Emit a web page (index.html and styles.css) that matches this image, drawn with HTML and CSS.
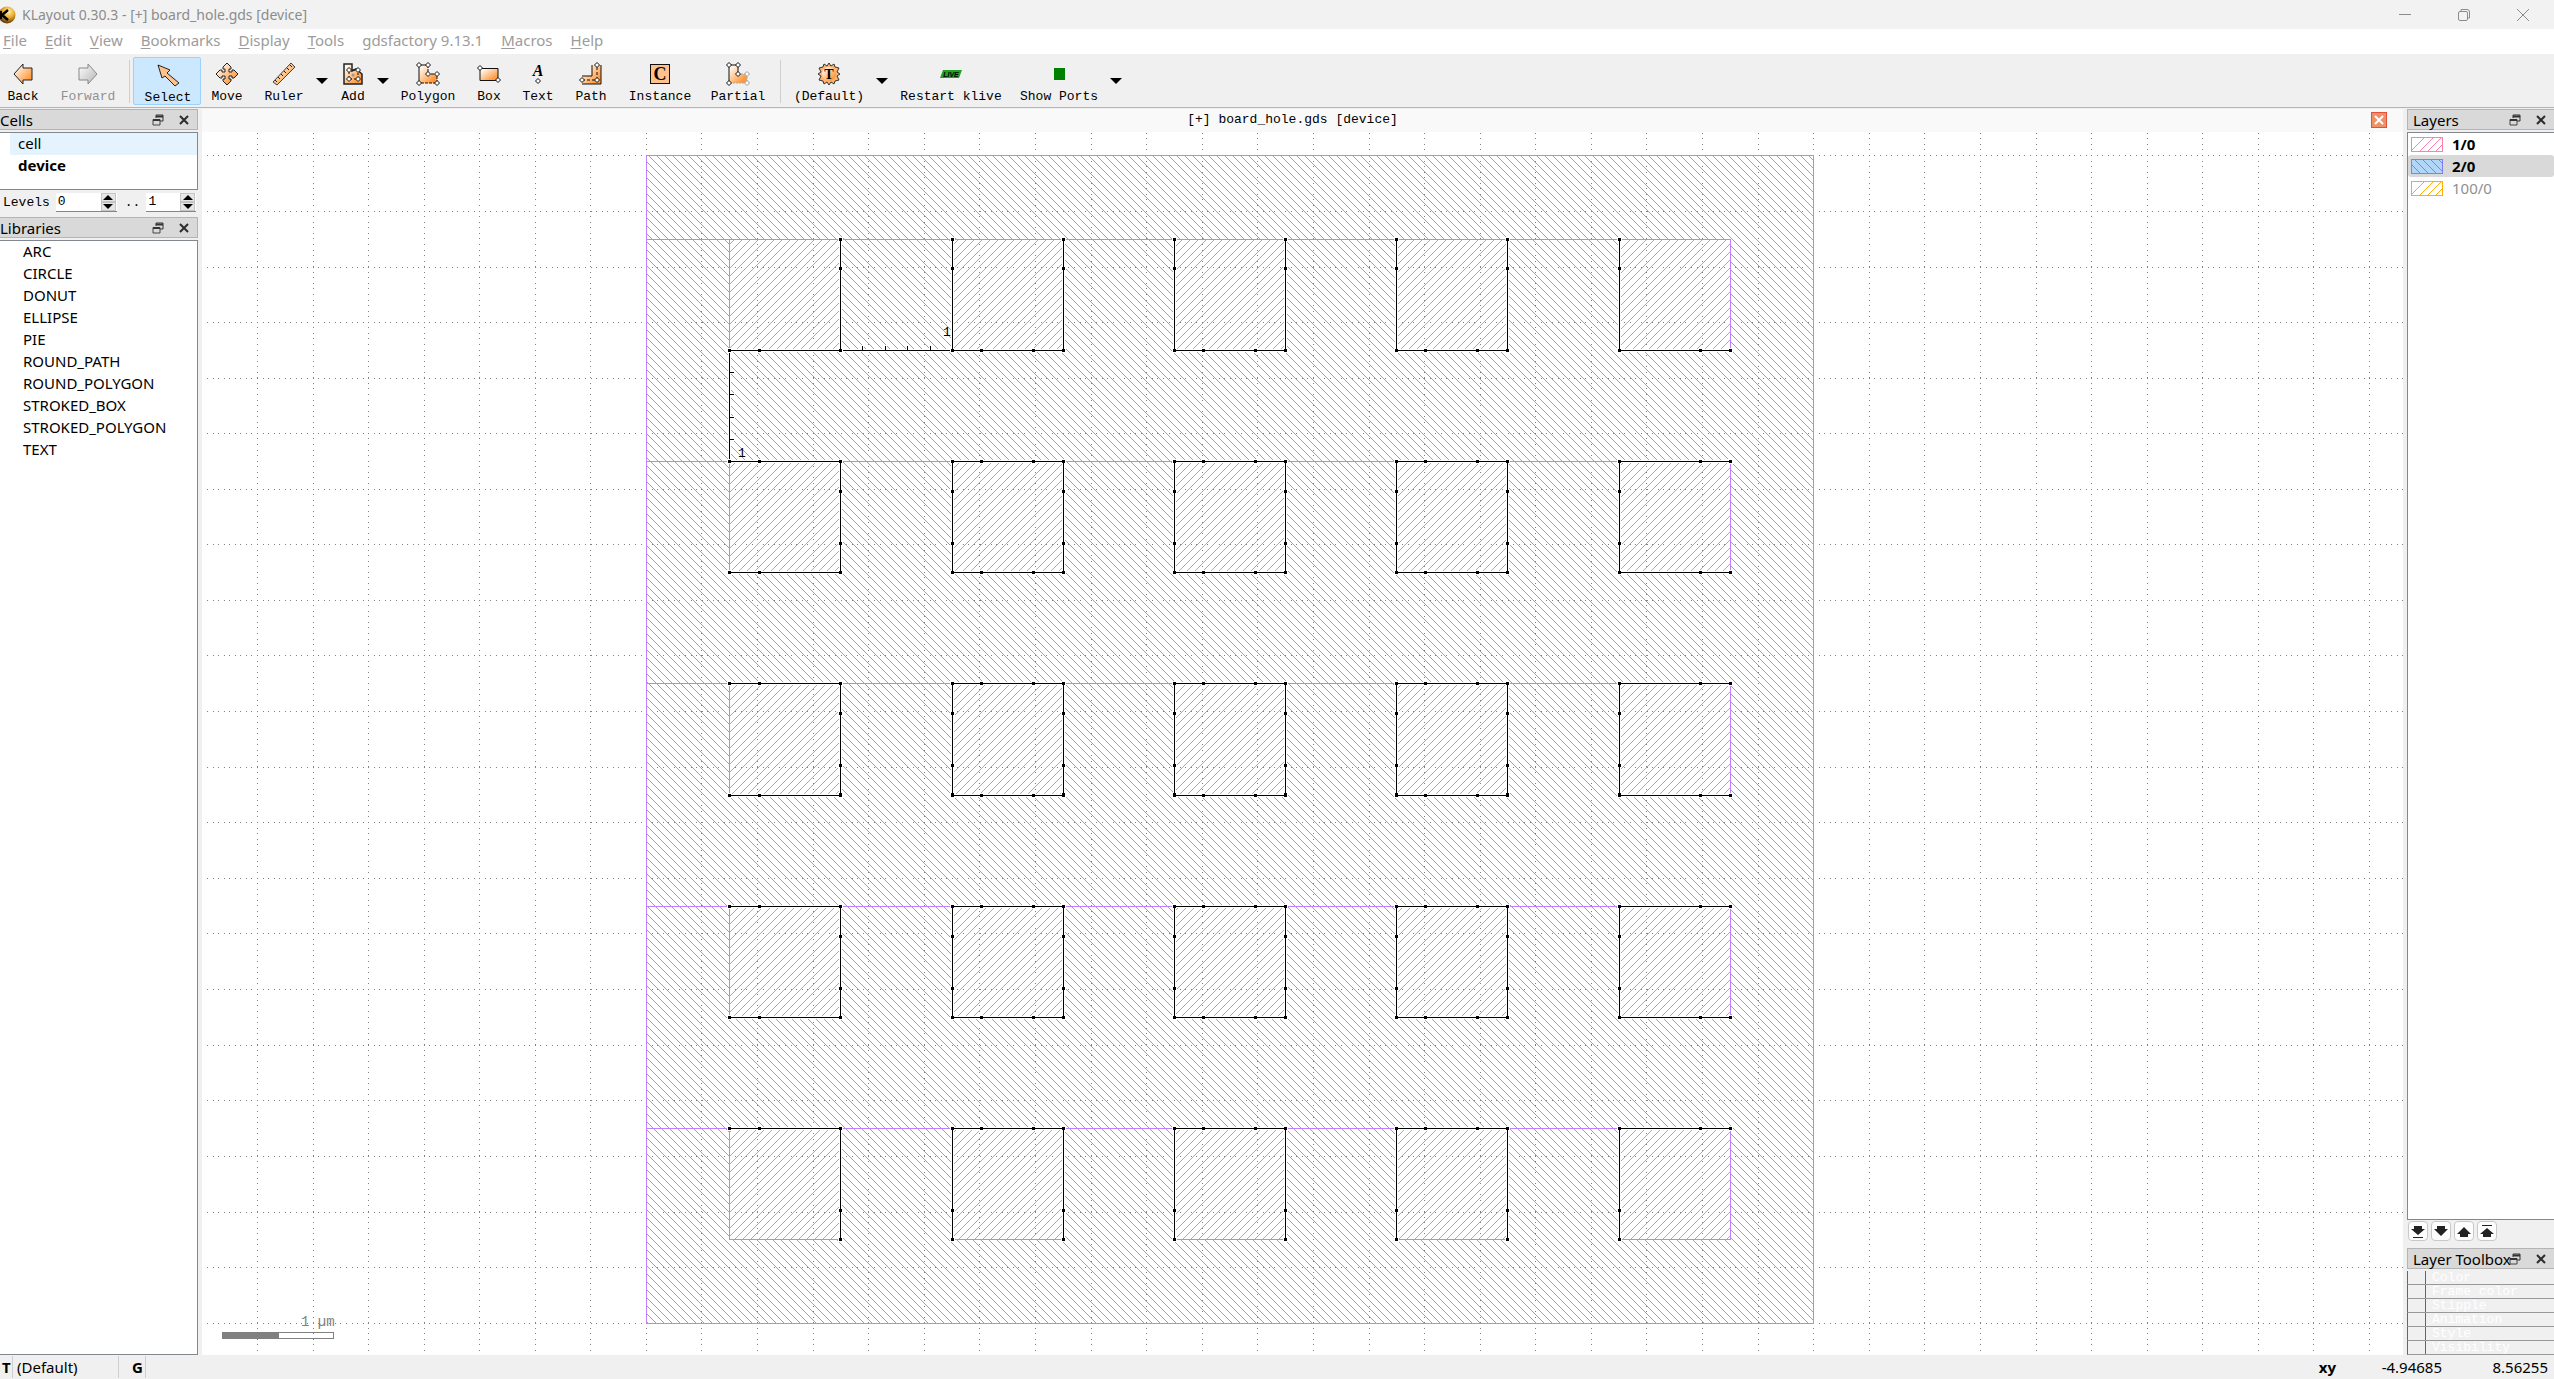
FILE: index.html
```html
<!DOCTYPE html>
<html lang="en">
<head>
<meta charset="utf-8">
<title>KLayout 0.30.3 - [+] board_hole.gds [device]</title>
<link rel="stylesheet" href="styles.css">
</head>
<body>
<svg class="defs" width="0" height="0" aria-hidden="true">
  <defs>
    <linearGradient id="orange" x1="0" y1="0" x2="1" y2="1"><stop offset=".15" stop-color="#fff4ea"/><stop offset=".8" stop-color="#ff9a3c"/></linearGradient>
    <linearGradient id="grey" x1="0" y1="0" x2="1" y2="1"><stop offset="0" stop-color="#fff"/><stop offset="1" stop-color="#b4b4b4"/></linearGradient>
    <radialGradient id="gold" cx=".6" cy=".3" r=".7"><stop offset="0" stop-color="#fff3a8"/><stop offset=".5" stop-color="#e8a92c"/><stop offset="1" stop-color="#5c3608"/></radialGradient>
    <path id="node" d="M0-2.500L2.500 0L0 2.500L-2.500 0Z" stroke-width="1"/>
    <g id="float"><path d="M4 4V1H11V7H8" fill="none" stroke="#333"/><path d="M4 2.500H11" stroke="#333" stroke-width="2"/><path d="M1 5.500H8V11H1Z" fill="#d9d9d9" stroke="#444"/><path d="M1 6H8" stroke="#333" stroke-width="2"/></g>
    <path id="cross" d="M2 2L10 10M10 2L2 10" stroke="#2c2c2c" stroke-width="2"/>
  </defs>
</svg>

<header class="titlebar">
  <svg class="app-icon" width="17" height="18" viewBox="0 0 17 18"><circle cx="7" cy="9" r="8.500" fill="url(#gold)"/><path d="M0 5H2V13H0Z" fill="#000"/><path d="M8 4L2 9L8 14" fill="none" stroke="#000" stroke-width="2.500"/></svg>
  <h1>KLayout 0.30.3 - [+] board_hole.gds [device]</h1>
  <div class="window-controls">
    <button aria-label="Minimize"><svg width="14" height="14"><path d="M1 6.500H13"/></svg></button>
    <button aria-label="Restore"><svg width="14" height="14"><rect x="1.500" y="3.500" width="9" height="9" rx="1.500"/><path d="M4 3V1.500H10Q12.500 1.500 12.500 4V10H11"/></svg></button>
    <button aria-label="Close"><svg width="14" height="14"><path d="M1 1L13 13M13 1L1 13"/></svg></button>
  </div>
</header>

<nav class="menubar">
  <button><u>F</u>ile</button><button><u>E</u>dit</button><button><u>V</u>iew</button><button><u>B</u>ookmarks</button><button><u>D</u>isplay</button><button><u>T</u>ools</button><button>gdsfactory 9.13.1</button><button><u>M</u>acros</button><button><u>H</u>elp</button>
</nav>

<div class="toolbar" role="toolbar">
  <button class="tool w46"><svg class="icon"><path d="M3 12L12 2V6H21V18H12V22Z" fill="url(#orange)" stroke="#222"/></svg>Back</button>
  <button class="tool w84" disabled><svg class="icon"><path d="M21 12L12 2V6H3V18H12V22Z" fill="url(#grey)" stroke="#888"/></svg>Forward</button>
  <span class="sep"></span>
  <button class="tool w68 active"><svg class="icon"><path d="M2 2L14 7L11 10L23 20L19 23L9 13L6 15Z" fill="#ffc28a" stroke="#222"/></svg>Select</button>
  <button class="tool w52"><svg class="icon"><path d="M12 1L16 5V7H14V10H17V8H19L23 12L19 16H17V14H14V17H16V19L12 23L8 19V17H10V14H7V16H5L1 12L5 8H7V10H10V7H8V5Z" fill="url(#orange)" stroke="#222"/></svg>Move</button>
  <button class="tool w62"><svg class="icon"><path d="M1 20L5 23L23 5L19 1Z" fill="url(#orange)" stroke="#444"/><path d="M3 18L5 20M6 15L8 17M9 12L11 14M12 9L14 11M15 6L17 8M18 3L20 5" stroke="#222"/></svg>Ruler</button>
  <button class="drop w14" aria-label="Ruler options"></button>
  <button class="tool w48"><svg class="icon"><path d="M3 2H11V9L15 7L21 12V22H3Z" fill="url(#orange)" stroke="#222" stroke-width="1.500"/><path d="M8 8H17V17H8Z" fill="none" stroke="#111" stroke-dasharray="2 2"/><circle cx="12" cy="13" r="1.500" fill="#999"/><g class="nodes"><use href="#node" x="8" y="8"/><use href="#node" x="17" y="8"/><use href="#node" x="8" y="17"/><use href="#node" x="17" y="17"/></g></svg>Add</button>
  <button class="drop w12" aria-label="Add options"></button>
  <button class="tool w78"><svg class="icon"><path d="M3 3H12V12H21V21H3Z" fill="url(#orange)"/><path d="M3 21V3H12" fill="none" stroke="#111"/><path d="M12 3V12H21V21H3" fill="none" stroke="#111" stroke-dasharray="3 1"/><g class="nodes"><use href="#node" x="3" y="3"/><use href="#node" x="12" y="3"/><use href="#node" x="12" y="12"/><use href="#node" x="21" y="12"/><use href="#node" x="21" y="21"/><use href="#node" x="3" y="21"/></g></svg>Polygon</button>
  <button class="tool w44"><svg class="icon"><path d="M3 6.500H21V18.500H3Z" fill="url(#orange)" stroke="#111"/><g class="nodes"><use href="#node" x="3" y="6"/><use href="#node" x="21" y="18"/></g></svg>Box</button>
  <button class="tool w54"><svg class="icon"><text x="12" y="14" class="glyph-a">A</text><g class="nodes"><use href="#node" x="12" y="19"/></g></svg>Text</button>
  <button class="tool w52"><svg class="icon"><path d="M13 3H22V22H3V14H13Z" fill="url(#orange)"/><path d="M22 3V22H3M13 3V14H3" fill="none" stroke="#111"/><path d="M3 18H18V3" fill="none" stroke="#111" stroke-dasharray="3 2"/><g class="nodes"><use href="#node" x="3" y="18"/><use href="#node" x="18" y="18"/><use href="#node" x="18" y="3"/></g></svg>Path</button>
  <button class="tool w86"><svg class="icon"><rect x="2.500" y="2.500" width="19" height="19" fill="#ffc28c" stroke="#111"/><text x="12" y="18" class="glyph-c">C</text></svg>Instance</button>
  <button class="tool w70"><svg class="icon"><path d="M3 3H12V12H21V21H3Z" fill="url(#orange)"/><path d="M3 21V3H12V12" fill="none" stroke="#111"/><path d="M12 12H21V21H3" fill="none" stroke="#aaa" stroke-dasharray="2 1"/><g class="nodes"><use href="#node" x="3" y="3"/><use href="#node" x="12" y="3"/><use href="#node" x="12" y="12"/><use href="#node" x="3" y="21"/></g><g class="nodes pale"><use href="#node" x="21" y="12"/><use href="#node" x="21" y="21"/></g></svg>Partial</button>
  <span class="sep wide"></span>
  <button class="tool w84"><svg class="icon"><path d="M12 1L14 4L17 2L18 5L22 6L20 10L23 12L20 14L22 18L18 19L17 22L14 20L12 23L10 20L7 22L6 19L2 18L4 14L1 12L4 10L2 6L6 5L7 2L10 4Z" fill="#ffb26b" stroke="#333"/><circle cx="12" cy="12" r="7" fill="url(#orange)"/><text x="12" y="17" class="glyph-t">T</text></svg>(Default)</button>
  <button class="drop w22" aria-label="Technology options"></button>
  <button class="tool w116"><svg class="icon"><path d="M4 8H23L20 16H1Z" fill="#22a122"/><text x="12" y="15" class="glyph-live">LIVE</text></svg>Restart klive</button>
  <button class="tool w100"><svg class="icon"><rect x="7" y="6" width="11" height="12" fill="#008000"/></svg>Show Ports</button>
  <button class="drop w14" aria-label="Port options"></button>
</div>

<div class="workspace">
  <aside class="left">
    <section class="dock">
      <h2><span>Cells</span><button aria-label="Float"><svg width="12" height="12"><use href="#float"/></svg></button><button aria-label="Close"><svg width="12" height="12"><use href="#cross"/></svg></button></h2>
      <ul class="list cells"><li class="hover">cell</li><li class="top">device</li></ul>
      <div class="levels">
        <label for="lv0">Levels</label>
        <span class="spin"><input id="lv0" type="text" value="0"><span class="arrows"><button class="up" aria-label="Up"></button><button class="down" aria-label="Down"></button></span></span>
        <label for="lv1">..</label>
        <span class="spin short"><input id="lv1" type="text" value="1"><span class="arrows"><button class="up" aria-label="Up"></button><button class="down" aria-label="Down"></button></span></span>
      </div>
    </section>
    <section class="dock grow">
      <h2><span>Libraries</span><button aria-label="Float"><svg width="12" height="12"><use href="#float"/></svg></button><button aria-label="Close"><svg width="12" height="12"><use href="#cross"/></svg></button></h2>
      <ul class="list libs"><li>ARC</li><li>CIRCLE</li><li>DONUT</li><li>ELLIPSE</li><li>PIE</li><li>ROUND_PATH</li><li>ROUND_POLYGON</li><li>STROKED_BOX</li><li>STROKED_POLYGON</li><li>TEXT</li></ul>
    </section>
  </aside>

  <main class="view">
    <div class="tab"><span>[+] board_hole.gds [device]</span><button aria-label="Close tab"><svg width="14" height="14"><path d="M3 3L11 11M11 3L3 11" stroke="#fff" stroke-width="2"/></svg></button></div>
    <svg class="layout" shape-rendering="crispEdges">
      <defs>
        <pattern id="hatch2" width="8" height="8" patternUnits="userSpaceOnUse"><path fill="#c080ff" d="M2 0h1v1h-1zM3 1h1v1h-1zM4 2h1v1h-1zM5 3h1v1h-1zM6 4h1v1h-1zM7 5h1v1h-1zM0 6h1v1h-1zM1 7h1v1h-1z"/></pattern>
        <pattern id="hatch1" width="8" height="8" patternUnits="userSpaceOnUse"><path fill="#ff80a8" d="M4 0h1v1h-1zM3 1h1v1h-1zM2 2h1v1h-1zM1 3h1v1h-1zM0 4h1v1h-1zM7 5h1v1h-1zM6 6h1v1h-1zM5 7h1v1h-1z"/></pattern>
        <!-- 3px handle and the horizontal / vertical edge lines it sits on -->
        <rect id="dot" x="-1" y="-1" width="3" height="3"/>
        <g id="hfirst"><rect width="112" height="1"/><use href="#dot"/><use href="#dot" x="30"/><use href="#dot" x="111"/></g>
        <g id="hmid"><rect width="112" height="1"/><use href="#dot"/><use href="#dot" x="29"/><use href="#dot" x="81"/><use href="#dot" x="111"/></g>
        <g id="hlast"><rect width="112" height="1"/><use href="#dot"/><use href="#dot" x="81"/><use href="#dot" x="111"/></g>
        <g id="vtop"><rect width="1" height="112"/><use href="#dot"/><use href="#dot" y="29"/><use href="#dot" y="111"/></g>
        <g id="vmid"><rect width="1" height="112"/><use href="#dot"/><use href="#dot" y="30"/><use href="#dot" y="82"/><use href="#dot" y="111"/></g>
        <g id="vbot"><rect width="1" height="112"/><use href="#dot"/><use href="#dot" y="82"/><use href="#dot" y="111"/></g>
        <g id="hrow"><use href="#hfirst" x="83"/><use href="#hmid" x="306"/><use href="#hmid" x="528"/><use href="#hmid" x="750"/><use href="#hlast" x="973"/></g>
        <g id="vrowtop"><use href="#vtop" x="194"/><use href="#vtop" x="306"/><use href="#vtop" x="417"/><use href="#vtop" x="528"/><use href="#vtop" x="639"/><use href="#vtop" x="750"/><use href="#vtop" x="861"/><use href="#vtop" x="973"/></g>
        <g id="vrowmid"><use href="#vmid" x="194"/><use href="#vmid" x="306"/><use href="#vmid" x="417"/><use href="#vmid" x="528"/><use href="#vmid" x="639"/><use href="#vmid" x="750"/><use href="#vmid" x="861"/><use href="#vmid" x="973"/></g>
        <g id="vrowbot"><use href="#vbot" x="194"/><use href="#vbot" x="306"/><use href="#vbot" x="417"/><use href="#vbot" x="528"/><use href="#vbot" x="639"/><use href="#vbot" x="750"/><use href="#vbot" x="861"/><use href="#vbot" x="973"/></g>
        <g id="rulers">
          <use href="#hrow" y="195"/><use href="#hrow" y="306"/><use href="#hrow" y="417"/><use href="#hrow" y="528"/><use href="#hrow" y="640"/><use href="#hrow" y="751"/><use href="#hrow" y="862"/><use href="#hrow" y="973"/>
          <use href="#vrowtop" y="84"/><use href="#vrowmid" y="306"/><use href="#vrowmid" y="528"/><use href="#vrowmid" y="751"/><use href="#vrowbot" y="973"/>
          <path d="M197 195h107v1h-107zM216 191h1v4h-1zM239 191h1v4h-1zM261 191h1v4h-1zM284 191h1v4h-1zM83 198h1v106h-1zM84 217h4v1h-4zM84 239h4v1h-4zM84 262h4v1h-4zM84 284h4v1h-4z"/>
        </g>
        <path id="holes" d="M83 84h112v112h-112zM306 84h112v112h-112zM528 84h112v112h-112zM750 84h112v112h-112zM973 84h112v112h-112zM83 306h112v112h-112zM306 306h112v112h-112zM528 306h112v112h-112zM750 306h112v112h-112zM973 306h112v112h-112zM83 528h112v112h-112zM306 528h112v112h-112zM528 528h112v112h-112zM750 528h112v112h-112zM973 528h112v112h-112zM83 751h112v112h-112zM306 751h112v112h-112zM528 751h112v112h-112zM750 751h112v112h-112zM973 751h112v112h-112zM83 973h112v112h-112zM306 973h112v112h-112zM528 973h112v112h-112zM750 973h112v112h-112zM973 973h112v112h-112z"/>
        <mask id="board"><rect width="1168" height="1169" fill="#fff"/><use href="#holes" fill="#000"/></mask>
      </defs>
      <g transform="translate(444 23)">
        <g class="grid" transform="translate(.5 .5)">
          <path d="M-389-22.700V1210M-333-22.700V1210M-278-22.700V1210M-222-22.700V1210M-167-22.700V1210M-111-22.700V1210M-56-22.700V1210M0-22.700V1210M55-22.700V1210M111-22.700V1210M167-22.700V1210M222-22.700V1210M278-22.700V1210M333-22.700V1210M389-22.700V1210M445-22.700V1210M500-22.700V1210M556-22.700V1210M611-22.700V1210M667-22.700V1210M723-22.700V1210M778-22.700V1210M834-22.700V1210M889-22.700V1210M945-22.700V1210M1000-22.700V1210M1056-22.700V1210M1112-22.700V1210M1167-22.700V1210M1223-22.700V1210M1278-22.700V1210M1334-22.700V1210M1390-22.700V1210M1445-22.700V1210M1501-22.700V1210M1556-22.700V1210M1612-22.700V1210M1667-22.700V1210M1723-22.700V1210"/>
          <path d="M-439.500 0H2200M-439.500 56H2200M-439.500 112H2200M-439.500 167H2200M-439.500 223H2200M-439.500 278H2200M-439.500 334H2200M-439.500 389H2200M-439.500 445H2200M-439.500 500H2200M-439.500 556H2200M-439.500 612H2200M-439.500 667H2200M-439.500 723H2200M-439.500 778H2200M-439.500 834H2200M-439.500 890H2200M-439.500 945H2200M-439.500 1001H2200M-439.500 1057H2200M-439.500 1112H2200M-439.500 1168H2200"/>
        </g>
        <rect width="1168" height="1169" fill="url(#hatch2)" mask="url(#board)"/>
        <use href="#holes" fill="url(#hatch1)"/>
        <path fill="#c080ff" d="M0 0h1168v1h-1168zM0 1168h1168v1h-1168zM0 0h1v1169h-1zM1167 0h1v1169h-1zM0 84h1085v1h-1085zM0 306h973v1h-973zM0 528h973v1h-973zM0 751h973v1h-973zM0 973h973v1h-973zM83 84h1v112h-1zM83 306h1v112h-1zM83 528h1v112h-1zM83 751h1v112h-1zM83 973h1v112h-1zM1084 84h1v112h-1zM1084 306h1v112h-1zM1084 528h1v112h-1zM1084 751h1v112h-1zM1084 973h1v112h-1zM83 1084h112v1h-112zM306 1084h112v1h-112zM528 1084h112v1h-112zM750 1084h112v1h-112zM973 1084h112v1h-112z"/>
        <use href="#rulers" class="halo"/>
        <use href="#rulers"/>
        <text class="mark" x="297" y="181">1</text>
        <text class="mark" x="92" y="302">1</text>
      </g>
      <g class="scale">
        <path d="M20.500 1200.500h111v6h-111z" fill="none"/><path d="M20.500 1200.500h56v6h-56z"/>
        <text x="99" y="1194">1 µm</text>
      </g>
    </svg>
  </main>

  <aside class="right">
    <section class="dock grow">
      <h2><span>Layers</span><button aria-label="Float"><svg width="12" height="12"><use href="#float"/></svg></button><button aria-label="Close"><svg width="12" height="12"><use href="#cross"/></svg></button></h2>
      <ul class="list layers">
        <li><svg class="swatch pink"><path d="M-2 14L12 0M6 15L21 0M14 15L29 0M22 15L37 0"/></svg>1/0</li>
        <li class="selected"><svg class="swatch violet"><path d="M-5 0L10 15M3 0L18 15M11 0L26 15M19 0L34 15M27 0L42 15"/></svg>2/0</li>
        <li class="hidden-layer"><svg class="swatch amber"><path d="M-2 14L12 0M6 15L21 0M14 15L29 0M22 15L37 0"/></svg>100/0</li>
      </ul>
      <div class="moves">
        <button aria-label="Move to bottom"><svg width="18" height="18"><path d="M5 4H13V7H16L9 13L2 7H5ZM4 15H14V16H4Z"/></svg></button>
        <button aria-label="Move down"><svg width="18" height="18"><path d="M5 4H13V7H16L9 14L2 7H5Z"/></svg></button>
        <button aria-label="Move up"><svg width="18" height="18"><path d="M5 15H13V12H16L9 5L2 12H5Z"/></svg></button>
        <button aria-label="Move to top"><svg width="18" height="18"><path d="M5 15H13V12H16L9 6L2 12H5ZM4 3H14V4H4Z"/></svg></button>
      </div>
    </section>
    <section class="dock">
      <h2><span>Layer Toolbox</span><button aria-label="Float"><svg width="12" height="12"><use href="#float"/></svg></button><button aria-label="Close"><svg width="12" height="12"><use href="#cross"/></svg></button></h2>
      <div class="toolbox"><button>Color</button><button>Frame color</button><button>Stipple</button><button>Animation</button><button>Style</button><button>Visibility</button></div>
    </section>
  </aside>
</div>

<footer class="status">
  <b class="tech">T</b><span class="name">(Default)</span><b class="g">G</b>
  <b class="xy">xy</b><span class="cx">-4.94685</span><span class="cy">8.56255</span>
</footer>
</body>
</html>
```
FILE: styles.css
```css
* { box-sizing: border-box; }
body {
  margin: 0;
  height: 100vh;
  display: flex;
  flex-direction: column;
  overflow: hidden;
  background: #f0f0f0;
  color: #000;
  font: 15px/22px "Noto Sans", sans-serif;
}
button {
  margin: 0;
  padding: 0;
  border: 0;
  background: none;
  color: inherit;
  font: inherit;
}
h1, h2 { margin: 0; font: inherit; }
.defs { position: absolute; }

.titlebar {
  display: flex;
  align-items: center;
  height: 29px;
  background: #f2f2f2;
  color: #8c8c8c;
}
.app-icon { margin-right: 5px; }
.titlebar h1 { flex: 1; font-size: 14px; }
.window-controls { display: flex; gap: 45px; margin-right: 24px; }
.window-controls button { display: flex; }
.window-controls svg { fill: none; stroke: #8c8c8c; }

.menubar {
  display: flex;
  gap: 18px;
  height: 27px;
  padding: 0 3px 3px;
  background: #fff;
  border-bottom: 2px solid #f0f0f0;
  color: #9c9c9c;
}
.menubar u { text-underline-offset: 2px; }

.toolbar {
  display: flex;
  height: 52px;
  border-bottom: 1px solid #b4b4b4;
  font: 13px/18px "Liberation Mono", monospace;
}
.tool {
  display: flex;
  flex-direction: column;
  align-items: center;
  height: 48px;
  margin-top: 1px;
  padding-top: 4px;
  border: 1px solid transparent;
  border-radius: 2px;
  white-space: nowrap;
}
.tool:disabled { color: #909090; }
.tool.active { padding: 5px 0 0 2px; background: #cce8ff; border-color: #99d1ff; }
.icon { width: 24px; height: 24px; flex: none; margin-bottom: 2px; overflow: visible; }
.sep { width: 1px; margin: 4px 3px 4px -1px; background: #cfcfcf; }
.sep.wide { margin: 4px 6px 4px 7px; }
.nodes { fill: #fff; stroke: #111; }
.nodes.pale { stroke: #999; }
.glyph-a, .glyph-c, .glyph-t, .glyph-live { text-anchor: middle; font-family: "Liberation Serif", serif; font-weight: bold; }
.glyph-a { font-size: 16px; font-style: italic; }
.glyph-c { font-size: 18px; }
.glyph-t { font-size: 14px; }
.glyph-live { font-family: "Liberation Sans", sans-serif; font-size: 7px; font-style: italic; }
.w12 { width: 12px; }
.w14 { width: 14px; }
.w22 { width: 22px; }
.w44 { width: 44px; }
.w46 { width: 46px; }
.w48 { width: 48px; }
.w52 { width: 52px; }
.w54 { width: 54px; }
.w62 { width: 62px; }
.w68 { width: 68px; }
.w70 { width: 70px; }
.w78 { width: 78px; }
.w84 { width: 84px; }
.w86 { width: 86px; }
.w100 { width: 100px; }
.w116 { width: 116px; }
.drop { display: flex; justify-content: center; padding-top: 22px; }
.drop::before { content: ""; border: 6px solid transparent; border-top-color: #000; border-bottom: 0; }

.workspace { flex: 1; display: flex; min-height: 0; padding-top: 1px; }
.left { width: 198px; margin-right: 4px; display: flex; flex-direction: column; gap: 4px; }
.right { width: 147px; margin-left: 4px; display: flex; flex-direction: column; gap: 5px; }
.dock { display: flex; flex-direction: column; }
.dock.grow { flex: 1; min-height: 0; }
.dock h2 {
  display: flex;
  align-items: center;
  gap: 14px;
  height: 21px;
  margin-bottom: 2px;
  border: 1px solid #b4b4b4;
  background: #d9d9d9;
  line-height: 20px;
  white-space: nowrap;
}
.dock h2 span { flex: 1; min-width: 0; }
.dock h2 button { display: flex; width: 12px; flex: none; }
.left h2 { padding-right: 7px; border-left: 0; }
.right h2 { padding: 0 7px 0 5px; border-right: 0; }
.list {
  margin: 0;
  padding: 0;
  list-style: none;
  background: #fff;
  border: 1px solid #828790;
}
.list li { height: 22px; line-height: 20px; }
.left .list { border-left: 0; }
.cells { height: 58px; padding-left: 10px; }
.cells li { padding-left: 8px; border-radius: 2px 0 0 2px; }
.cells .hover { background: #e5f3ff; }
.cells .top { font-weight: bold; }
.libs { flex: 1; padding-left: 23px; }
.levels {
  display: flex;
  align-items: center;
  height: 23px;
  padding: 2px 0 0 3px;
  font: 13px/18px "Liberation Mono", monospace;
}
.spin { display: flex; width: 61px; height: 19px; margin: 0 8px 0 6px; padding-right: 1px; background: #fff; border-bottom: 1px solid #868686; }
.spin.short { width: 50px; margin: 0 0 0 6px; }
.spin input { flex: 1; min-width: 0; border: 0; padding: 0 2px; background: none; font: inherit; }
.arrows { display: flex; flex-direction: column; width: 15px; }
.arrows button { flex: 1; display: flex; align-items: center; justify-content: center; background: #e6e6e6; border: 1px solid #c4c4c4; }
.arrows button::before { content: ""; border: 5px solid transparent; }
.arrows .up::before { border-top: 0; border-bottom-color: #000; }
.arrows .down::before { border-bottom: 0; border-top-color: #000; }

.view { flex: 1; min-width: 0; display: flex; flex-direction: column; }
.tab {
  display: flex;
  align-items: center;
  height: 23px;
  padding: 0 16px 2px 12px;
  background: #f9f9f9;
  font: 13px/18px "Liberation Mono", monospace;
}
.tab span { flex: 1; text-align: center; }
.tab button { display: flex; background: #ee9068; border: 1px solid #e4503c; }
.layout { flex: 1; width: 100%; min-height: 0; background: #fff; display: block; }
.grid { fill: none; stroke: #808080; stroke-dasharray: 1 4.558; }
.halo { fill: #fff; stroke: #fff; stroke-width: 2px; }
.mark { font: 13px "Liberation Mono", monospace; }
.scale { fill: #808080; font: 14px "Liberation Mono", monospace; }
.scale path { stroke: #808080; }

.layers { flex: 1; border-right: 0; }
.layers li { display: flex; align-items: center; gap: 9px; padding-left: 3px; font-weight: bold; }
.layers .selected { background: #d9d9d9; border-radius: 3px; }
.layers .hidden-layer { color: #909090; font-weight: normal; }
.swatch { width: 32px; height: 15px; border: 1px solid; fill: none; stroke: currentColor; }
.pink { color: #ff80a8; }
.violet { color: #8a7cf0; background: #b2d6f8; }
.amber { color: #ffae00; }
.moves { display: flex; gap: 3px; padding: 1px 0 2px 1px; }
.moves button { display: flex; width: 20px; height: 20px; background: #fdfdfd; border: 1px solid #c8c8c8; border-radius: 4px; fill: #222; }
.toolbox { font: 13px/14px "Liberation Mono", monospace; }
.toolbox button {
  display: block;
  width: 100%;
  height: 14px;
  padding-left: 6px;
  border-left: 1px solid #666;
  border-bottom: 1px solid #999;
  color: #fff;
  text-align: left;
  overflow: hidden;
}
.toolbox button::before { content: ""; display: inline-block; width: 11px; height: 14px; margin-right: 6px; border-right: 1px solid #666; vertical-align: top; }
.toolbox button::before { margin-left: 0; }

.status { display: flex; align-items: center; height: 24px; }
.status .tech { width: 13px; padding-left: 2px; border-right: 1px solid #cfcfcf; }
.status .name { width: 106px; padding-left: 4px; border-right: 1px solid #cfcfcf; }
.status .g { width: 27px; padding-left: 13px; border-right: 1px solid #cfcfcf; }
.status .xy { margin-left: auto; }
.status .cx { width: 106px; text-align: right; }
.status .cy { width: 112px; padding-right: 6px; text-align: right; }
```
